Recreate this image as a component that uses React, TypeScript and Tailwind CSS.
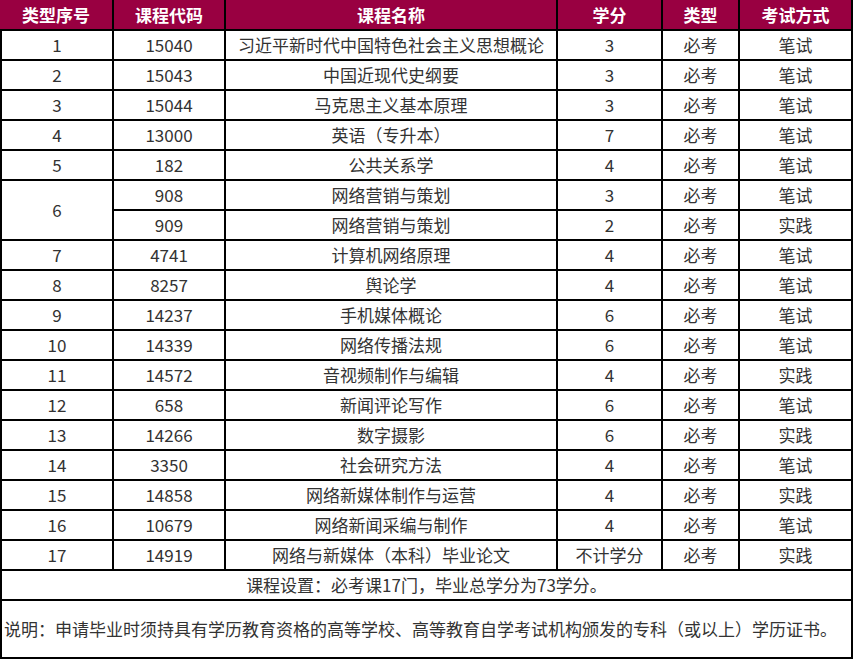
const rows = [
  ["1", "15040", "习近平新时代中国特色社会主义思想概论", "3", "必考", "笔试"],
  ["2", "15043", "中国近现代史纲要", "3", "必考", "笔试"],
  ["3", "15044", "马克思主义基本原理", "3", "必考", "笔试"],
  ["4", "13000", "英语（专升本）", "7", "必考", "笔试"],
  ["5", "182", "公共关系学", "4", "必考", "笔试"],
  ["6", "908", "网络营销与策划", "3", "必考", "笔试"],
  ["", "909", "网络营销与策划", "2", "必考", "实践"],
  ["7", "4741", "计算机网络原理", "4", "必考", "笔试"],
  ["8", "8257", "舆论学", "4", "必考", "笔试"],
  ["9", "14237", "手机媒体概论", "6", "必考", "笔试"],
  ["10", "14339", "网络传播法规", "6", "必考", "笔试"],
  ["11", "14572", "音视频制作与编辑", "4", "必考", "实践"],
  ["12", "658", "新闻评论写作", "6", "必考", "笔试"],
  ["13", "14266", "数字摄影", "6", "必考", "实践"],
  ["14", "3350", "社会研究方法", "4", "必考", "笔试"],
  ["15", "14858", "网络新媒体制作与运营", "4", "必考", "实践"],
  ["16", "10679", "网络新闻采编与制作", "4", "必考", "笔试"],
  ["17", "14919", "网络与新媒体（本科）毕业论文", "不计学分", "必考", "实践"],
];

const headers = ["类型序号", "课程代码", "课程名称", "学分", "类型", "考试方式"];

export default function App() {
  return (
    <div className="w-[853px] h-[659px] bg-white font-['Microsoft_YaHei','Noto_Sans_CJK_SC',sans-serif] text-[17px] text-[#333]">
      <div className="grid grid-cols-[110px_110px_330px_103px_75px_111px] grid-rows-[29px_repeat(19,28px)_56px] gap-[2px] bg-black px-[2px] pb-[2px]">
        {headers.map((h, i) => (
          <div
            key={h}
            className={`flex items-center justify-center bg-[#990041] text-white font-bold ${i === 0 ? "-ml-[2px]" : ""}`}
          >
            {h}
          </div>
        ))}
        {rows.map((r, ri) => (
          <div key={ri} className="contents">
            {r[0] !== "" && (
              <div
                className={`flex items-center justify-center bg-white ${r[0] === "6" ? "row-span-2" : ""}`}
              >
                {r[0]}
              </div>
            )}
            {r.slice(1).map((c, ci) => (
              <div key={ci} className="flex items-center justify-center bg-white whitespace-nowrap">
                {c}
              </div>
            ))}
          </div>
        ))}
        <div className="col-span-6 flex items-center justify-center bg-white">
          课程设置：必考课17门，毕业总学分为73学分。
        </div>
        <div className="col-span-6 flex items-center bg-white pl-[2px] whitespace-nowrap">
          说明：申请毕业时须持具有学历教育资格的高等学校、高等教育自学考试机构颁发的专科（或以上）学历证书。
        </div>
      </div>
    </div>
  );
}
